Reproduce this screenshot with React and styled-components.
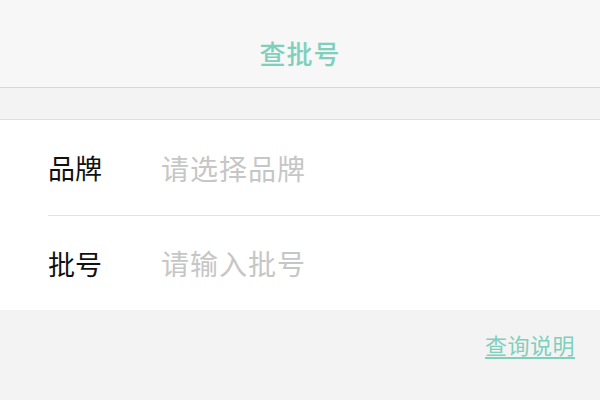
import React from "react";
import styled, { createGlobalStyle } from "styled-components";

const Global = createGlobalStyle`
  html, body { margin: 0; padding: 0; background: #f3f3f3; }
  body { font-family: "Noto Sans CJK SC", "Noto Sans", sans-serif; }
`;

const Page = styled.div`
  width: 600px;
  height: 400px;
  background: #f3f3f3;
  display: flex;
  flex-direction: column;
  overflow: hidden;
`;

const Header = styled.header`
  background: #f7f7f7;
  border-bottom: 1px solid #d6d6d6;
  display: flex;
  align-items: center;
  justify-content: center;
  padding-top: 18px;
  box-sizing: content-box;
  height: 69px;
`;

const Title = styled.h1`
  margin: 0;
  font-size: 26px;
  font-weight: 500;
  color: #80cfbd;
  letter-spacing: 1px;
`;

const Spacer = styled.div`
  height: 31px;
  border-bottom: 1px solid #dedede;
`;

const Form = styled.div`
  background: #ffffff;
  display: flex;
  flex-direction: column;
`;

const Row = styled.div`
  height: ${(p) => p.$h}px;
  display: flex;
  align-items: center;
  margin-left: 48px;
  border-bottom: ${(p) => (p.$divider ? "1px solid #e2e2e2" : "none")};
`;

const Label = styled.span`
  width: 113px;
  font-size: 27px;
  color: #111;
  line-height: 1;
`;

const Input = styled.input`
  border: none;
  outline: none;
  background: transparent;
  font-family: inherit;
  font-size: 28px;
  letter-spacing: 1px;
  color: #111;
  padding: 0;
  flex: 1;
  &::placeholder { color: #c6c6c6; }
`;

const Footer = styled.div`
  display: flex;
  justify-content: flex-end;
  padding: 18px 25px 0 0;
`;

const Link = styled.a`
  font-size: 22px;
  color: #7fcfbd;
  text-decoration: underline;
  text-underline-offset: 3px;
  letter-spacing: 0.5px;
`;

export default function App() {
  return (
    <Page>
      <Global />
      <Header>
        <Title>查批号</Title>
      </Header>
      <Spacer />
      <Form>
        <Row $h={95} $divider>
          <Label>品牌</Label>
          <Input placeholder="请选择品牌" />
        </Row>
        <Row $h={94}>
          <Label>批号</Label>
          <Input placeholder="请输入批号" />
        </Row>
      </Form>
      <Footer>
        <Link>查询说明</Link>
      </Footer>
    </Page>
  );
}
